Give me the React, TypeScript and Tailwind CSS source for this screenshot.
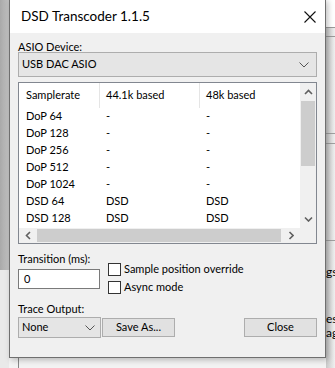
import React from "react";

const Chevron = ({ dir }: { dir: "up" | "down" | "left" | "right" }) => {
  const paths: Record<string, string> = {
    up: "M1 5 L4.5 1.5 L8 5",
    down: "M1 1.5 L4.5 5 L8 1.5",
    left: "M5 1 L1.5 4.5 L5 8",
    right: "M1.5 1 L5 4.5 L1.5 8",
  };
  const vert = dir === "up" || dir === "down";
  return (
    <svg width={vert ? 9 : 6} height={vert ? 6 : 9} viewBox={vert ? "0 0 9 6" : "0 0 6 9"}>
      <path d={paths[dir]} fill="none" stroke="#606060" strokeWidth="1.6" />
    </svg>
  );
};

const ComboChevron = () => (
  <svg width="10" height="6" viewBox="0 0 10 6">
    <path d="M0.5 0.5 L5 5 L9.5 0.5" fill="none" stroke="#555" strokeWidth="1" />
  </svg>
);

const rows: [string, string, string][] = [
  ["DoP 64", "-", "-"],
  ["DoP 128", "-", "-"],
  ["DoP 256", "-", "-"],
  ["DoP 512", "-", "-"],
  ["DoP 1024", "-", "-"],
  ["DSD 64", "DSD", "DSD"],
  ["DSD 128", "DSD", "DSD"],
];

export default function App() {
  return (
    <div
      className="relative w-[335px] h-[368px] overflow-hidden bg-[#f3f3f3] text-[12px] text-black"
      style={{ fontFamily: 'Lato, "Noto Sans", "Liberation Sans", sans-serif' }}
    >
      {/* Desktop background */}
      <div className="absolute left-0 top-0 w-[9px] h-[270px] bg-gradient-to-r from-[#a9a9a9] to-[#c2c2c2]" />
      <div className="absolute left-0 top-[270px] w-[9px] h-[98px] bg-[#e9e9e9]" />
      <div className="absolute left-[18px] top-[358px] w-px h-[10px] bg-[#888]" />
      <div className="absolute left-[326px] top-0 w-[9px] h-[368px] bg-gradient-to-r from-[#c8c8c8] to-[#f0f0f0]" />
      <div className="absolute left-[326px] top-0 w-[9px] h-[27px] bg-white" />
      <div className="absolute left-[326px] top-[27px] w-[9px] h-px bg-[#9a9a9a]" />
      <div className="absolute left-[326px] top-[36px] w-[9px] h-px bg-[#9a9a9a]" />
      <div className="absolute left-[326px] top-[133px] w-[9px] h-px bg-[#a0a0a0]" />
      <div className="absolute left-[326px] top-[143px] w-[9px] h-px bg-[#a0a0a0]" />
      <div className="absolute left-[326px] top-[240px] w-[9px] h-px bg-[#a0a0a0]" />
      <div className="absolute left-[326px] top-[265px] w-[9px] overflow-hidden leading-[14px] text-[12px]">gs</div>
      <div className="absolute left-[326px] top-[312px] w-[9px] overflow-hidden leading-[14px] text-[12px]">es</div>
      <div className="absolute left-[326px] top-[326px] w-[9px] overflow-hidden leading-[14px] text-[12px]">ag</div>

      {/* Dialog window */}
      <div className="absolute left-[9px] top-[-1px] w-[317px] h-[359px] border border-[#6f6f6f] bg-[#f0f0f0] flex flex-col shadow-[2px_2px_6px_rgba(0,0,0,0.25)]">
        {/* Title bar */}
        <div className="h-[33px] bg-white flex items-center justify-between pl-[11px] pr-[9px] shrink-0">
          <span className="text-[13.5px]">DSD Transcoder 1.1.5</span>
          <svg width="12" height="12" viewBox="0 0 12 12">
            <path d="M0.5 0.5 L11.5 11.5 M11.5 0.5 L0.5 11.5" stroke="#111" strokeWidth="1.1" />
          </svg>
        </div>

        {/* Body */}
        <div className="flex flex-col pl-[8px] pr-[8px] text-[11px]">
          <div className="h-[12px] mt-[7px] leading-[14px] whitespace-nowrap">ASIO Device:</div>
          <div className="h-[25px] w-[299px] bg-[#e5e5e5] border border-[#adadad] flex items-center justify-between pl-[3px] pr-[7px]">
            <span>USB DAC ASIO</span>
            <ComboChevron />
          </div>

          {/* List view */}
          <div className="mt-[5px] h-[162px] w-[299px] border border-[#828790] bg-white flex flex-col">
            <div className="flex flex-1 min-h-0">
              <div className="flex-1 flex flex-col">
                <div className="h-[25px] flex">
                  <div className="w-[81px] pl-[7px] flex items-center border-r border-[#e5e5e5]">Samplerate</div>
                  <div className="w-[100px] pl-[6px] flex items-center border-r border-[#e5e5e5]">44.1k based</div>
                  <div className="flex-1 pl-[6px] flex items-center">48k based</div>
                </div>
                {rows.map((r) => (
                  <div key={r[0]} className="h-[17px] flex items-center">
                    <div className="w-[81px] pl-[7px]">{r[0]}</div>
                    <div className="w-[100px] pl-[6px]">{r[1]}</div>
                    <div className="flex-1 pl-[6px]">{r[2]}</div>
                  </div>
                ))}
              </div>
              {/* vertical scrollbar */}
              <div className="w-[16px] bg-[#f0f0f0] flex flex-col">
                <div className="h-[18px] flex items-center justify-center">
                  <Chevron dir="up" />
                </div>
                <div className="h-[65px] mx-px bg-[#cdcdcd]" />
                <div className="flex-1" />
                <div className="h-[18px] flex items-center justify-center">
                  <Chevron dir="down" />
                </div>
              </div>
            </div>
            {/* horizontal scrollbar */}
            <div className="h-[15px] flex bg-[#f0f0f0] shrink-0">
              <div className="w-[18px] flex items-center justify-center">
                <Chevron dir="left" />
              </div>
              <div className="w-[244px] my-px bg-[#cdcdcd]" />
              <div className="w-[19px] flex items-center justify-center">
                <Chevron dir="right" />
              </div>
              <div className="flex-1" />
            </div>
          </div>

          {/* Transition + checkboxes */}
          <div className="flex items-start h-[37px] mt-[8px]">
            <div className="flex flex-col w-[82px]">
              <div className="h-[14px] leading-[14px] whitespace-nowrap">Transition (ms):</div>
              <div className="mt-[3px] h-[20px] bg-white border border-[#7a7a7a] flex items-center pl-[5px]">0</div>
            </div>
            <div className="flex flex-col ml-[8px] mt-[11px] gap-[5px]">
              <div className="flex items-center h-[13px]">
                <div className="w-[13px] h-[13px] border border-[#333] bg-white" />
                <span className="ml-[3px] whitespace-nowrap">Sample position override</span>
              </div>
              <div className="flex items-center h-[13px]">
                <div className="w-[13px] h-[13px] border border-[#333] bg-white" />
                <span className="ml-[3px] whitespace-nowrap">Async mode</span>
              </div>
            </div>
          </div>

          {/* Trace output */}
          <div className="h-[15px] leading-[15px] mt-[12px] whitespace-nowrap">Trace Output:</div>
          <div className="flex items-start mt-[1px]">
            <div className="w-[83px] h-[21px] bg-[#e5e5e5] border border-[#adadad] flex items-center justify-between pl-[3px] pr-[5px]">
              <span>None</span>
              <ComboChevron />
            </div>
            <div className="ml-[1px] mt-px w-[73px] h-[19px] bg-[#e1e1e1] border border-[#adadad] flex items-center justify-center">
              Save As...
            </div>
            <div className="flex-1" />
            <div className="w-[73px] h-[19px] mt-px bg-[#e1e1e1] border border-[#adadad] flex items-center justify-center">
              Close
            </div>
          </div>
        </div>
      </div>
    </div>
  );
}
